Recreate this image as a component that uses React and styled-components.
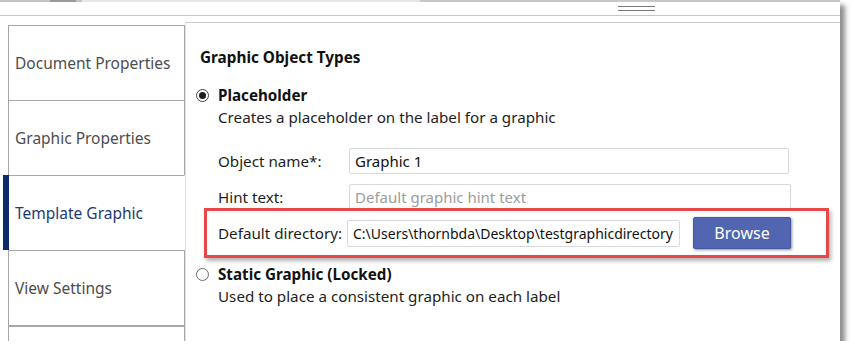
import React from 'react';
import styled, { createGlobalStyle } from 'styled-components';

const Global = createGlobalStyle`
  html, body { margin: 0; padding: 0; background: #fff; }
  body { font-family: "Noto Sans", "Segoe UI", sans-serif; color: #1a1a1a; }
  * { box-sizing: border-box; }
`;

const Window = styled.div`
  width: 840px;
  height: 341px;
  background: #fff;
  box-shadow: 5px 5px 5px rgba(0, 0, 0, 0.45);
  display: flex;
  flex-direction: column;
  overflow: hidden;
`;

const TopStrip = styled.div`
  display: flex;
  height: 2px;
`;

const Seg = styled.div`
  width: ${(p) => p.$w}px;
  flex: ${(p) => (p.$w ? 'none' : '1')};
  background: ${(p) => p.$c};
`;

const Toolbar = styled.div`
  height: 13px;
  display: flex;
  padding-left: 618px;
`;

const Grip = styled.div`
  margin-top: 4px;
  width: 37px;
  height: 5px;
  border-top: 1px solid #7a7a7a;
  border-bottom: 1px solid #7a7a7a;
`;

const Divider = styled.div`
  height: 1px;
  background: #c6c6c6;
`;

const Body = styled.div`
  flex: 1;
  display: flex;
  align-items: stretch;
  min-height: 0;
`;

const Nav = styled.nav`
  margin: 9px 0 0 8px;
  width: 177px;
  border-left: 1px solid #a6a6a6;
  display: flex;
  flex-direction: column;
`;

const NavItem = styled.div`
  flex: none;
  height: 75px;
  border-top: ${(p) => (p.$thick ? 2 : 1)}px solid #a8a8a8;
  border-right: 1px solid ${(p) => (p.$active ? 'transparent' : '#a8a8a8')};
  display: flex;
  align-items: center;
  padding-left: 6px;
  font-size: 15.5px;
  color: ${(p) => (p.$active ? '#1d3a74' : '#4d4d4d')};
  background: #fff;
  box-shadow: ${(p) => (p.$active ? '-6px 0 0 #0d2a6c' : 'none')};
`;

const Content = styled.section`
  flex: 1;
  margin-top: 6px;
  border-top: 1px solid #c8c8c8;
  border-left: 1px solid #e0e0e0;
  padding: 24px 0 0 10px;
  display: flex;
  flex-direction: column;
  align-items: flex-start;
  font-size: 15.2px;
`;

const Heading = styled.div`
  margin-left: 4px;
  font-size: 15.3px;
  font-weight: 700;
  line-height: 20px;
  color: #111;
`;

const RadioRow = styled.div`
  margin-top: ${(p) => p.$mt}px;
  display: flex;
  align-items: center;
  gap: 9px;
  height: 22px;
  font-weight: 700;
  color: #111;
`;

const RadioCircle = styled.span`
  width: 13px;
  height: 13px;
  border-radius: 50%;
  border: 1px solid ${(p) => (p.$checked ? '#444' : '#6e6e6e')};
  background: #fff;
  display: grid;
  place-items: center;
  &::after {
    content: '';
    width: 7px;
    height: 7px;
    border-radius: 50%;
    background: ${(p) => (p.$checked ? '#1e1e1e' : 'transparent')};
  }
`;

const Desc = styled.div`
  margin-left: 22px;
  line-height: 22px;
  color: #1e1e1e;
`;

const FieldRow = styled.div`
  margin-top: ${(p) => p.$mt}px;
  margin-left: 22px;
  display: flex;
  align-items: center;
`;

const Label = styled.label`
  width: ${(p) => p.$w}px;
  color: #1e1e1e;
`;

const Input = styled.input`
  width: ${(p) => p.$w}px;
  height: ${(p) => p.$h || 26}px;
  border: 1px solid #d6dadf;
  border-radius: 2px;
  padding: 0 5px;
  font-family: inherit;
  font-size: ${(p) => p.$fs || 15}px;
  color: #111;
  background: #fff;
  outline: none;
  &::placeholder {
    color: #9c9c9c;
  }
`;

const Highlight = styled.div`
  position: relative;
  margin: -2px 0 0 8px;
  border: 3px solid #e8474a;
  background: #fff;
  box-shadow: 2px 3px 4px rgba(0, 0, 0, 0.3);
  height: 50px;
  padding: 0 35px 0 11px;
  display: flex;
  align-items: center;
  gap: 13px;
`;

const DirField = styled.div`
  display: flex;
  align-items: center;
`;

const Button = styled.button`
  width: 98px;
  height: 32px;
  background: #5165b0;
  border: 1px solid #45599f;
  border-radius: 2px;
  color: #fff;
  font-family: inherit;
  font-size: 16px;
  box-shadow: 1px 1px 3px rgba(0, 0, 0, 0.45);
  padding: 0;
`;

const navItems = [
  'Document Properties',
  'Graphic Properties',
  'Template Graphic',
  'View Settings',
  '',
];

export default function App() {
  return (
    <>
      <Global />
      <Window>
        <TopStrip>
          <Seg $w={50} $c="#c4c4c4" />
          <Seg $w={26} $c="#9a9a9a" />
          <Seg $w={6} $c="#c4c4c4" />
          <Seg $w={338} $c="#e6e6e6" />
          <Seg $c="#c8c8c8" />
        </TopStrip>
        <Toolbar>
          <Grip />
        </Toolbar>
        <Divider />
        <Body>
          <Nav>
            {navItems.map((t, i) => (
              <NavItem key={i} $active={i === 2} $thick={i === 4}>
                {t}
              </NavItem>
            ))}
          </Nav>
          <Content>
            <Heading>Graphic Object Types</Heading>
            <RadioRow $mt={17}>
              <RadioCircle $checked />
              Placeholder
            </RadioRow>
            <Desc>Creates a placeholder on the label for a graphic</Desc>
            <FieldRow $mt={20}>
              <Label $w={131}>Object name*:</Label>
              <Input $w={440} readOnly value="Graphic 1" />
            </FieldRow>
            <FieldRow $mt={10}>
              <Label $w={131}>Hint text:</Label>
              <Input $w={442} readOnly placeholder="Default graphic hint text" />
            </FieldRow>
            <Highlight>
              <DirField>
                <Label $w={129}>Default directory:</Label>
                <Input
                  $w={333}
                  $h={27}
                  $fs={14}
                  readOnly
                  value="C:\Users\thornbda\Desktop\testgraphicdirectory"
                />
              </DirField>
              <Button>Browse</Button>
            </Highlight>
            <RadioRow $mt={5}>
              <RadioCircle />
              Static Graphic (Locked)
            </RadioRow>
            <Desc>Used to place a consistent graphic on each label</Desc>
          </Content>
        </Body>
      </Window>
    </>
  );
}
